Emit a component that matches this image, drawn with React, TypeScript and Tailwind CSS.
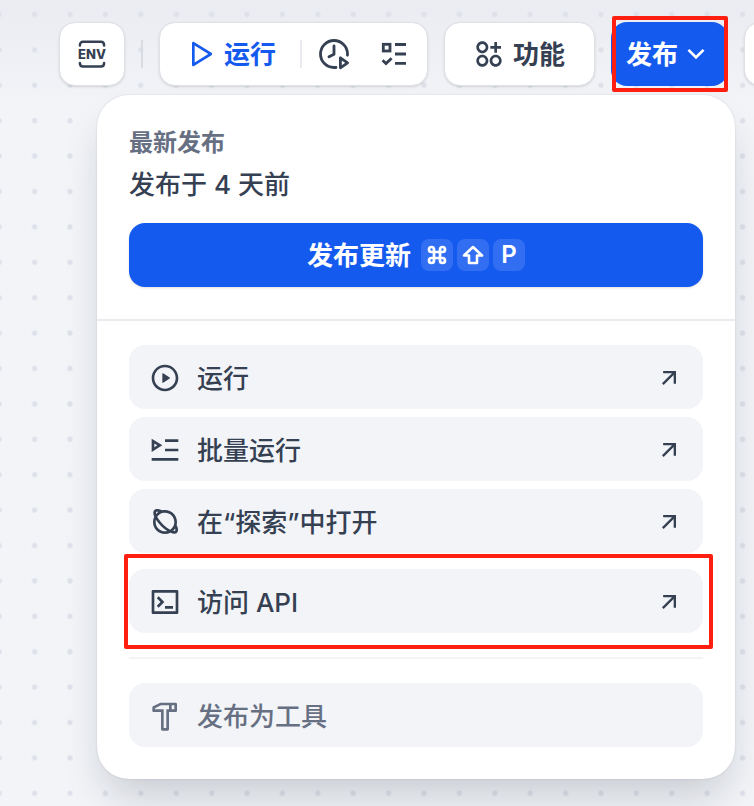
import React from 'react';
import type { IconType } from 'react-icons';
import {
  RiApps2AddLine,
  RiArrowDownSLine,
  RiArrowRightUpLine,
  RiHammerLine,
  RiPlanetLine,
  RiPlayCircleLine,
  RiPlayLargeLine,
  RiPlayList2Line,
  RiTerminalBoxLine,
} from 'react-icons/ri';

const EnvIcon: React.FC = () => (
  <svg className="h-8 w-8" viewBox="0 0 32 32" fill="none">
    <path
      d="M3.9 7.4C3.9 5 5 3.8 7 3.8H25C27 3.8 28.1 5 28.1 7.4M3.9 25C3.9 27.4 5 28.6 7 28.6H25C27 28.6 28.1 27.4 28.1 25"
      stroke="currentColor"
      strokeWidth="2.5"
      strokeLinecap="round"
    />
    <text
      x="16"
      y="21"
      textAnchor="middle"
      fill="currentColor"
      fontSize="13"
      fontWeight="800"
    >
      ENV
    </text>
  </svg>
);

const HistoryIcon: React.FC = () => (
  <svg
    className="h-8 w-8"
    viewBox="0 0 32 32"
    fill="none"
    stroke="currentColor"
    strokeWidth="2.8"
    strokeLinecap="round"
    strokeLinejoin="round"
  >
    <path d="M29.4 17.2C29.5 16.8 29.5 16.4 29.5 16A13.5 13.5 0 1 0 16 29.5H18" />
    <path d="M16 8V16.3L11 18.8" />
    <path d="M22.4 19.8V29.8L29.6 24.8Z" />
  </svg>
);

const ChecklistIcon: React.FC = () => (
  <svg
    className="h-8 w-8"
    viewBox="0 0 32 32"
    fill="none"
    stroke="currentColor"
    strokeWidth="2.8"
  >
    <rect x="5.3" y="6.3" width="6.7" height="6.7" />
    <path d="M17 6.5H28M17 16H28M17 25.3H28" />
    <path d="M4.6 22.2L8 25.6L13.6 20.2" />
  </svg>
);

const CommandIcon: React.FC = () => (
  <svg
    className="h-6 w-6"
    viewBox="0 0 24 24"
    fill="none"
    stroke="currentColor"
    strokeWidth="2.7"
  >
    <path d="M9 9H15V15H9ZM9 9H6.5A2.5 2.5 0 1 1 9 6.5ZM15 9V6.5A2.5 2.5 0 1 1 17.5 9ZM15 15H17.5A2.5 2.5 0 1 1 15 17.5ZM9 15V17.5A2.5 2.5 0 1 1 6.5 15Z" />
  </svg>
);

const ShiftIcon: React.FC = () => (
  <svg
    className="h-6 w-6"
    viewBox="0 0 24 24"
    fill="none"
    stroke="currentColor"
    strokeWidth="2.6"
    strokeLinejoin="round"
  >
    <path d="M12 4L21 12.5H16V20H8V12.5H3Z" />
  </svg>
);

const Kbd: React.FC<{ children: React.ReactNode }> = ({ children }) => (
  <kbd className="flex h-8 w-8 items-center justify-center rounded-lg bg-white/12 font-[Inter,sans-serif] text-2xl font-semibold">
    {children}
  </kbd>
);

const Highlight: React.FC<{ className: string }> = ({ className }) => (
  <span
    className={`pointer-events-none absolute rounded-xs border-4 border-[#ff1f11] ${className}`}
  />
);

const Action: React.FC<{
  icon: IconType;
  label: string;
  disabled?: boolean;
}> = ({ icon: Icon, label, disabled }) => {
  if (disabled) {
    return (
      <button
        type="button"
        disabled
        className="flex h-16 w-full items-center gap-4 rounded-2xl bg-[#f2f4f8] px-5 pt-0.5 font-medium text-[#676f83]"
      >
        <Icon className="h-8 w-8" />
        {label}
      </button>
    );
  }
  return (
    <a
      href="#"
      className="flex h-16 items-center gap-4 rounded-2xl bg-[#f2f4f8] px-5 pt-0.5 font-medium text-[#354052]"
    >
      <Icon className="h-8 w-8" />
      <span className="grow">{label}</span>
      <RiArrowRightUpLine className="h-7 w-7" />
    </a>
  );
};

const Toolbar: React.FC = () => {
  const card =
    'shrink-0 rounded-2xl border border-[#dfe1e7] bg-white shadow-sm text-[#354052]';
  return (
    <header className="flex items-center gap-4 pt-[22px] pl-[59px]">
      <button
        type="button"
        aria-label="ENV"
        className={`flex h-16 w-[66px] items-center justify-center ${card}`}
      >
        <EnvIcon />
      </button>
      <span className="h-7 w-0.5 shrink-0 bg-[#d9dbe2]" />
      <div className={`flex h-16 items-center pr-[5px] ${card}`}>
        <button
          type="button"
          className="flex h-full items-center gap-2 px-6 font-semibold text-[#155aef]"
        >
          <RiPlayLargeLine className="h-8 w-8" />
          运行
        </button>
        <span className="h-7 w-0.5 bg-[#e9ebf0]" />
        <button
          type="button"
          aria-label="运行历史"
          className="flex h-full w-16 items-center justify-center"
        >
          <HistoryIcon />
        </button>
        <button
          type="button"
          aria-label="检查清单"
          className="flex h-full w-14 items-center justify-center"
        >
          <ChecklistIcon />
        </button>
      </div>
      <button
        type="button"
        className={`flex h-16 items-center gap-2 pr-[29px] pl-7 font-semibold ${card}`}
      >
        <RiApps2AddLine className="h-8 w-8" />
        功能
      </button>
      <div className="relative shrink-0">
        <button
          type="button"
          className="flex h-16 items-center gap-0.5 rounded-2xl bg-[#155aef] pr-4 pl-[15px] font-semibold text-white"
        >
          发布
          <RiArrowDownSLine className="h-8 w-8" />
        </button>
        <Highlight className="-top-1.5 right-0 -bottom-1.5 left-px" />
      </div>
      <button
        type="button"
        aria-label="版本历史"
        className={`h-16 w-16 ${card}`}
      />
    </header>
  );
};

const PublishMenu: React.FC = () => (
  <section className="mt-[9px] mr-[19px] mb-6 ml-[97px] rounded-[32px] bg-white shadow-[0_0_2px_rgba(16,24,40,0.15),0_24px_40px_-8px_rgba(16,24,40,0.18)]">
    <div className="px-8 pt-8 pb-8">
      <h2 className="text-2xl font-semibold text-[#676f83]">最新发布</h2>
      <p className="mt-1.5 leading-10 font-medium text-[#354052]">
        发布于 4 天前
      </p>
      <button
        type="button"
        className="mt-[18px] flex h-16 w-full items-center justify-center gap-2.5 rounded-2xl bg-[#155aef] font-semibold text-white shadow-sm"
      >
        发布更新
        <span className="flex gap-1">
          <Kbd>
            <CommandIcon />
          </Kbd>
          <Kbd>
            <ShiftIcon />
          </Kbd>
          <Kbd>P</Kbd>
        </span>
      </button>
    </div>
    <div className="border-t-2 border-[#e9ebef] px-8 pt-6 pb-8">
      <nav className="flex flex-col gap-2">
        <Action icon={RiPlayCircleLine} label="运行" />
        <Action icon={RiPlayList2Line} label="批量运行" />
        <Action icon={RiPlanetLine} label="在“探索”中打开" />
        <div className="relative mt-2">
          <Action icon={RiTerminalBoxLine} label="访问 API" />
          <Highlight className="-top-[15px] -right-2.5 -bottom-4 -left-[5px]" />
        </div>
      </nav>
      <hr className="my-6 border-t-2 border-[#f3f4f6]" />
      <Action icon={RiHammerLine} label="发布为工具" disabled />
    </div>
  </section>
);

const App: React.FC = () => (
  <main className="relative isolate min-h-screen overflow-hidden bg-[#f2f4f8] bg-linear-to-b from-[#eaecf1] to-[#f2f4f8] to-[110px] font-[Inter,'Noto_Sans_CJK_SC',sans-serif] text-[26px]">
    <svg className="absolute inset-0 -z-10 h-full w-full" aria-hidden="true">
      <pattern
        id="dots"
        x="-18.5"
        y="-3.2"
        width="35.4"
        height="35.4"
        patternUnits="userSpaceOnUse"
      >
        <circle cx="17.7" cy="17.7" r="2.6" fill="#dfe1ea" />
      </pattern>
      <rect width="100%" height="100%" fill="url(#dots)" />
    </svg>
    <Toolbar />
    <PublishMenu />
  </main>
);

export default App;
